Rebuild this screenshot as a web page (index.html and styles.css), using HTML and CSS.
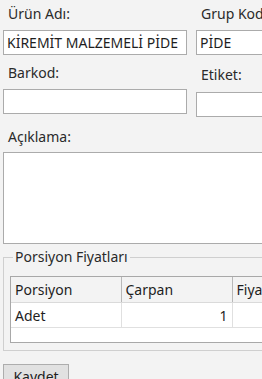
FILE: index.html
```html
<!DOCTYPE html>
<html lang="tr">
<head>
    <meta charset="UTF-8">
    <meta name="viewport" content="width=device-width, initial-scale=1.0">
    <title>Ürün Kartı</title>
    <link rel="stylesheet" href="styles.css">
</head>
<body>
    <div class="form">
        <div class="row">
            <div class="field">
                <label class="lbl first">Ürün Adı:</label>
                <input class="txt" type="text" value="KİREMİT MALZEMELİ PİDE">
            </div>
            <div class="field">
                <label class="lbl first">Grup Kodu:</label>
                <input class="txt" type="text" value="PİDE">
            </div>
        </div>

        <div class="row">
            <div class="field">
                <label class="lbl second">Barkod:</label>
                <input class="txt" type="text">
            </div>
            <div class="field">
                <label class="lbl second-right">Etiket:</label>
                <input class="txt" type="text">
            </div>
        </div>

        <label class="lbl third">Açıklama:</label>
        <textarea class="memo"></textarea>

        <fieldset class="group">
            <legend>Porsiyon Fiyatları</legend>
            <div class="grid">
                <table>
                    <colgroup>
                        <col class="c1"><col class="c2"><col class="c3">
                    </colgroup>
                    <thead>
                        <tr><th>Porsiyon</th><th>Çarpan</th><th>Fiyat</th></tr>
                    </thead>
                    <tbody>
                        <tr><td>Adet</td><td class="num">1</td><td></td></tr>
                    </tbody>
                </table>
            </div>
        </fieldset>

        <button class="btn">Kaydet</button>
    </div>
</body>
</html>
```

FILE: styles.css
```css
body {
    margin: 0;
    background: #f3f3f3;
    font-family: 'Noto Sans', 'Open Sans', sans-serif;
    font-size: 14px;
    color: #1e1e1e;
    overflow: hidden;
}
.form {
    width: 400px;
    padding: 0 3px;
}
.row {
    display: flex;
    gap: 9px;
}
.field {
    width: 184px;
    flex: none;
}
.lbl {
    display: block;
    box-sizing: border-box;
    padding-left: 5px;
    line-height: 20px;
    color: #2a2a2a;
}
.first {
    padding-top: 4px;
    height: 30px;
}
.second {
    padding-top: 8px;
    height: 34px;
}
.second-right {
    padding-top: 10px;
    height: 37px;
}
.third {
    padding-top: 10px;
    height: 35px;
}
.txt, .memo {
    display: block;
    box-sizing: border-box;
    width: 184px;
    height: 25px;
    margin: 0;
    border: 1px solid #ababab;
    background: #fff;
    font: inherit;
    color: #1e1e1e;
    padding: 0 3px;
    outline: none;
}
.memo {
    width: 300px;
    height: 92px;
    resize: none;
}
.group {
    margin: 3px 0 0;
    width: 300px;
    box-sizing: border-box;
    border: 1px solid #cfcfcf;
    padding: 9px 6px 7px;
}
.group legend {
    margin-left: 3px;
    padding: 0 2px;
    line-height: 20px;
    color: #2a2a2a;
}
.grid {
    height: 67px;
    box-sizing: border-box;
    border: 1px solid #a8a8a8;
    background: #fff;
    overflow: hidden;
}
table {
    border-collapse: collapse;
    table-layout: fixed;
    width: 330px;
}
col.c1 {
    width: 110px;
}
col.c2 {
    width: 111px;
}
col.c3 {
    width: 109px;
}
th, td {
    padding: 0 4px;
    text-align: left;
    font-weight: normal;
    white-space: nowrap;
    overflow: hidden;
}
th {
    height: 25px;
    background: #f3f3f3;
    border-right: 1px solid #b8b8b8;
    border-bottom: 1px solid #dadada;
}
td {
    height: 24px;
    border-right: 1px solid #e0e0e0;
    border-bottom: 1px solid #e0e0e0;
}
td.num {
    text-align: right;
}
.btn {
    display: block;
    margin-top: 13px;
    width: 66px;
    height: 25px;
    border: 1px solid #adadad;
    background: #e1e1e1;
    font: inherit;
    color: #1e1e1e;
    padding: 0;
}
```
